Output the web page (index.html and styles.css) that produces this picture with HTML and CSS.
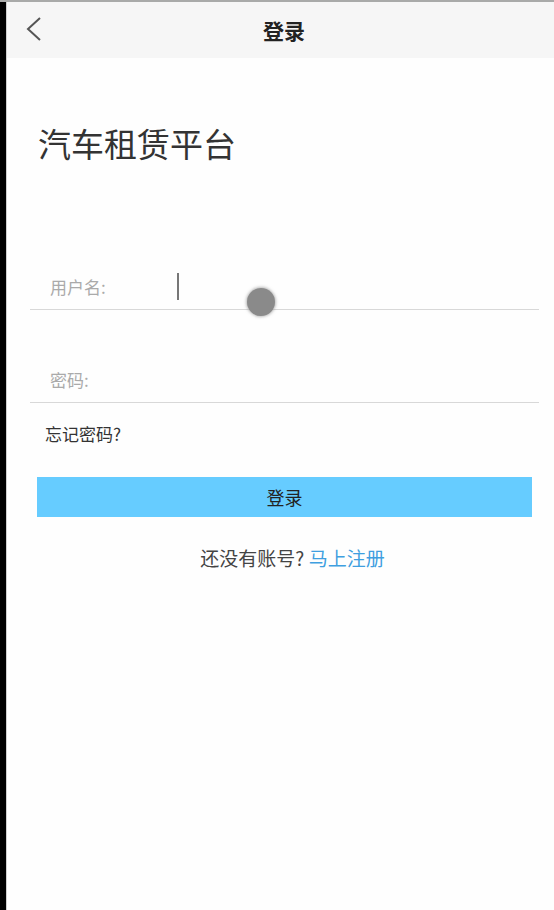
FILE: index.html
```html
<!DOCTYPE html>
<html lang="zh-CN">
<head>
    <meta charset="UTF-8">
    <meta name="viewport" content="width=device-width, initial-scale=1.0">
    <title>登录</title>
    <link rel="stylesheet" href="styles.css">
</head>
<body>
    <div class="frame">
        <div class="app">
            <div class="header">
                <a class="back" href="#">
                    <svg width="20" height="26" viewBox="0 0 20 26">
                        <polyline points="15,2 3,13 15,24" fill="none" stroke="#555" stroke-width="2" />
                    </svg>
                </a>
                <span class="header-title">登录</span>
            </div>

            <div class="main">
                <h1>汽车租赁平台</h1>

                <div class="form-row">
                    <label for="username">用户名:</label>
                    <div class="field">
                        <span class="caret"></span>
                        <input type="text" id="username">
                    </div>
                    <span class="touch"></span>
                </div>

                <div class="form-row">
                    <label for="password">密码:</label>
                    <div class="field">
                        <input type="password" id="password">
                    </div>
                </div>

                <p class="forgot">忘记密码?</p>

                <button class="login-btn">登录</button>

                <p class="register">还没有账号? <a href="#">马上注册</a></p>
            </div>
        </div>
    </div>
</body>
</html>
```

FILE: styles.css
```css
html, body {
    margin: 0;
    padding: 0;
    height: 100%;
}
body {
    font-family: "Noto Sans CJK SC", "Noto Sans", sans-serif;
    background-color: #fefefe;
    color: #333;
    border-top: 2px solid #a9aaa9;
    box-sizing: border-box;
}
.frame {
    height: 100%;
    border-left: 6px solid #000;
}
.app {
    height: 100%;
    border-left: 1px solid #cfcfcf;
    background-color: #fefefe;
}
.header {
    height: 56px;
    padding-left: 7px;
    background-color: #f6f6f6;
    display: flex;
    align-items: center;
    justify-content: center;
    position: relative;
}
.back {
    position: absolute;
    left: 18px;
    top: 14px;
}
.header-title {
    font-size: 21px;
    font-weight: bold;
    color: #222;
}
.main {
    padding: 65px 15px 0 23px;
}
h1 {
    margin: 0 0 0 8px;
    font-size: 33px;
    line-height: 40px;
    font-weight: normal;
    color: #333;
}
.form-row {
    display: flex;
    align-items: center;
    height: 46px;
    margin-top: 46px;
    border-bottom: 1px solid #d8d8d8;
    position: relative;
}
.form-row:first-of-type {
    margin-top: 100px;
}
label {
    width: 147px;
    padding-left: 20px;
    box-sizing: border-box;
    font-size: 17px;
    color: #aaa;
}
.field {
    flex: 1;
    display: flex;
    align-items: center;
}
.field input {
    border: none;
    outline: none;
    background: transparent;
    font-size: 17px;
    flex: 1;
    padding: 0;
}
.caret {
    width: 2px;
    height: 27px;
    background-color: #777;
}
.touch {
    position: absolute;
    left: 217px;
    top: 25px;
    width: 28px;
    height: 28px;
    border-radius: 50%;
    background-color: #8a8a8a;
    box-shadow: 0 0 3px 1px rgba(138, 138, 138, 0.6);
}
.forgot {
    margin: 21px 0 0 15px;
    font-size: 17px;
    line-height: 20px;
    color: #333;
}
.login-btn {
    display: block;
    width: 495px;
    height: 40px;
    margin: 33px 0 0 7px;
    border: none;
    background-color: #66ccff;
    color: #222;
    font-family: inherit;
    font-size: 18px;
    cursor: pointer;
}
.register {
    margin: 31px 0 0;
    padding-left: 16px;
    text-align: center;
    font-size: 19px;
    line-height: 20px;
    color: #444;
}
.register a {
    color: #3f9fe0;
    text-decoration: none;
}
```
